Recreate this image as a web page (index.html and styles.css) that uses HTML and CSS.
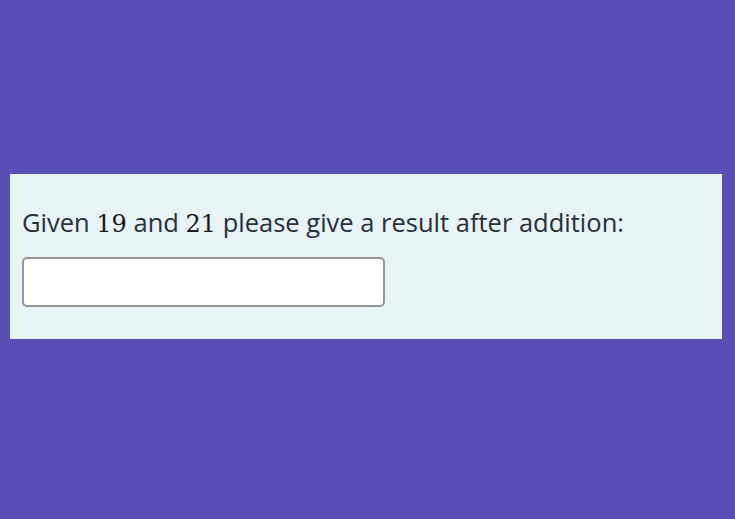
FILE: index.html
```html
<!DOCTYPE html>
<html>
<head>
<meta charset="utf-8">
<link rel="stylesheet" href="styles.css">
</head>
<body>
<div class="stage">
  <div class="panel">
    <p class="question">Given <span class="num">19</span> and <span class="num">21</span> please give a result after addition:</p>
    <input class="answer" type="text">
  </div>
</div>
</body>
</html>
```

FILE: styles.css
```css
html, body {
  margin: 0;
  height: 100%;
  background: #584eb3;
}
.stage {
  height: 519px;
  display: flex;
  align-items: center;
  padding: 0 13px 6px 10px;
  box-sizing: border-box;
}
.panel {
  flex: 1;
  height: 165px;
  box-sizing: border-box;
  background: #e8f3f5;
  padding: 31px 12px 0 12px;
}
.question {
  margin: 0 0 18px 0;
  font-family: "Open Sans", sans-serif;
  font-size: 25.5px;
  line-height: 34px;
  color: #253038;
  white-space: nowrap;
}
.num {
  font-family: "DejaVu Serif", serif;
  font-size: 24px;
  line-height: 1;
  color: #1a1a1a;
}
.answer {
  display: block;
  width: 363px;
  height: 50px;
  box-sizing: border-box;
  margin: 0;
  border: 2px solid #959595;
  border-radius: 5px;
  background: #fff;
}
```
